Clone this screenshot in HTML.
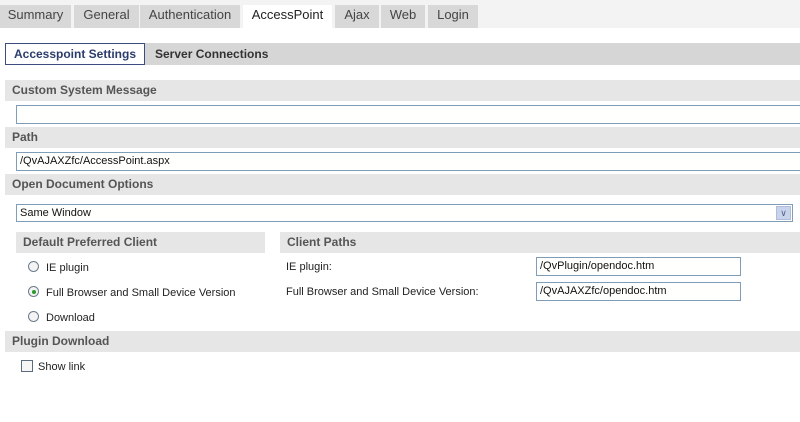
<!DOCTYPE html>
<html><head><style>
body{margin:0;width:800px;height:422px;background:#fff;font-family:"Liberation Sans",Arial,sans-serif;position:relative;overflow:hidden;color:#222}
.a{position:absolute;box-sizing:border-box}
.tab{position:absolute;top:5px;height:23px;background:#d8d8d8;color:#444;font-size:13px;line-height:20px;text-align:center}
.hd{position:absolute;background:#e6e6e6;color:#555;font-weight:bold;font-size:12px;line-height:21px;padding-left:7px;box-sizing:border-box;height:21px}
.in{position:absolute;border:1px solid #7f9db9;background:#fffffd;font-size:11px;line-height:17px;padding-left:3px;box-sizing:border-box;color:#111}
.t{position:absolute;font-size:11px;color:#222;white-space:nowrap}
.r{position:absolute;width:11px;height:11px;border:1px solid #6c7c8c;border-radius:50%;background:#f4f4f4;box-sizing:border-box}
</style></head><body>
<div class="a" style="left:0;top:0;width:800px;height:28px;background:#f3f3f3"></div>
<div class="tab" style="left:0;width:71px">Summary</div>
<div class="tab" style="left:74px;width:65px">General</div>
<div class="tab" style="left:140px;width:100px">Authentication</div>
<div class="tab" style="left:243px;width:89px;background:#fff;color:#222">AccessPoint</div>
<div class="tab" style="left:335px;width:44px">Ajax</div>
<div class="tab" style="left:381px;width:44px">Web</div>
<div class="tab" style="left:428px;width:50px">Login</div>

<div class="a" style="left:145px;top:43px;width:655px;height:22px;background:#d6d6d6"></div>
<div class="a" style="left:155px;top:43px;font-size:12px;font-weight:bold;color:#333;line-height:22px">Server Connections</div>
<div class="a" style="left:5px;top:43px;width:140px;height:22px;border:1px solid #3c4c7c;background:#fff;color:#2c3c6c;font-size:12px;font-weight:bold;line-height:20px;text-align:center">Accesspoint Settings</div>

<div class="hd" style="left:5px;top:80px;width:795px">Custom System Message</div>
<div class="in" style="left:16px;top:105px;width:790px;height:19px"></div>
<div class="hd" style="left:5px;top:127px;width:795px">Path</div>
<div class="in" style="left:16px;top:152px;width:790px;height:19px">/QvAJAXZfc/AccessPoint.aspx</div>
<div class="hd" style="left:5px;top:174px;width:795px">Open Document Options</div>
<div class="in" style="left:16px;top:204px;width:777px;height:18px;line-height:16px">Same Window</div>
<div class="a" style="left:776px;top:206px;width:15px;height:14px;background:#c8d4ec;border:1px solid #b0bcd8;font-size:9px;color:#4d6185;text-align:center;line-height:12px">&#8744;</div>

<div class="hd" style="left:16px;top:232px;width:249px">Default Preferred Client</div>
<div class="hd" style="left:280px;top:232px;width:520px">Client Paths</div>
<div class="r" style="left:28px;top:261px"></div><div class="t" style="left:46px;top:262px">IE plugin</div>
<div class="r" style="left:28px;top:286px"></div><div class="a" style="left:32px;top:290px;width:4px;height:4px;border-radius:50%;background:#2a9a2a"></div><div class="t" style="left:46px;top:287px">Full Browser and Small Device Version</div>
<div class="r" style="left:28px;top:311px"></div><div class="t" style="left:46px;top:312px">Download</div>
<div class="t" style="left:286px;top:261px">IE plugin:</div>
<div class="t" style="left:286px;top:286px">Full Browser and Small Device Version:</div>
<div class="in" style="left:536px;top:257px;width:205px;height:19px">/QvPlugin/opendoc.htm</div>
<div class="in" style="left:536px;top:282px;width:205px;height:19px">/QvAJAXZfc/opendoc.htm</div>

<div class="hd" style="left:5px;top:331px;width:795px">Plugin Download</div>
<div class="a" style="left:21px;top:360px;width:12px;height:12px;border:1px solid #5c6c7c;background:#f6f6f6"></div>
<div class="t" style="left:38px;top:361px">Show link</div>
</body></html>
